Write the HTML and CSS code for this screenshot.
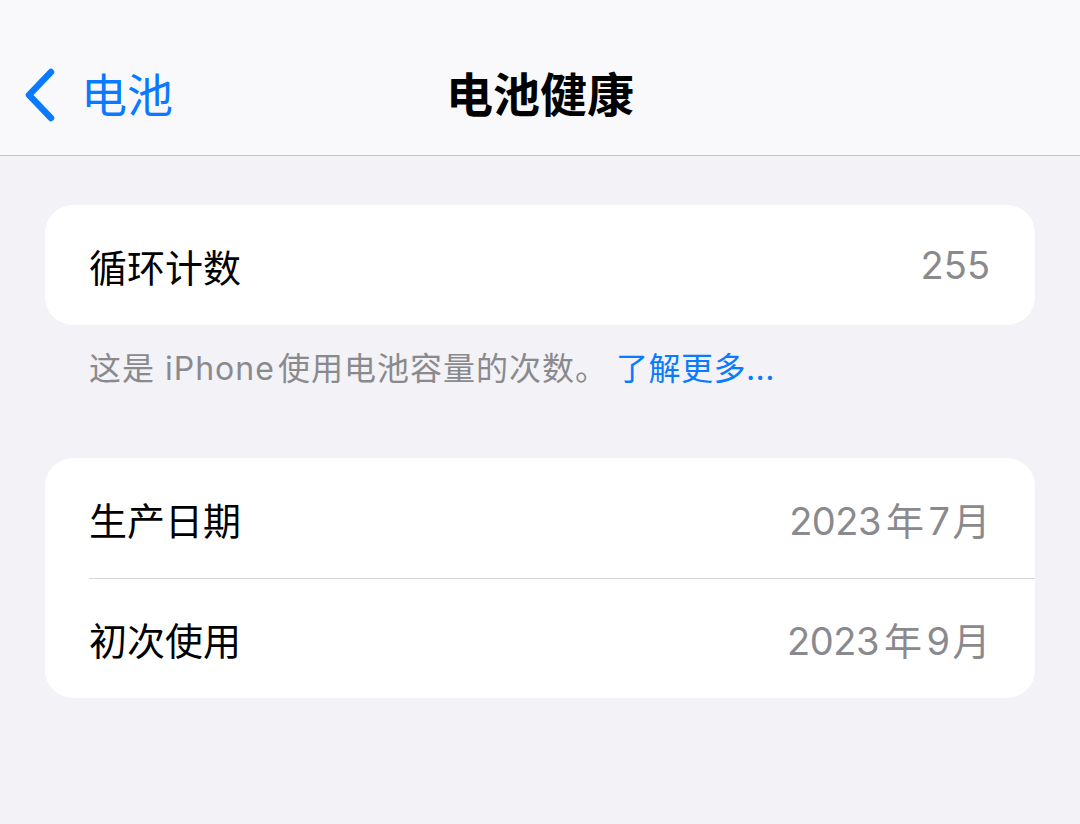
FILE: index.html
```html
<!DOCTYPE html>
<html lang="zh-CN">
<head>
  <meta charset="UTF-8">
  <title>电池健康</title>
  <link rel="stylesheet" href="styles.css">
</head>
<body>

<!-- 顶部导航 -->
<div class="navbar">
  <a class="back" href="#">
    <svg class="chevron" width="34" height="56" viewBox="0 0 34 56">
      <polyline points="27,5 5,28 27,51" fill="none" stroke="#0a7aff" stroke-width="6.5" stroke-linecap="round" stroke-linejoin="round"/>
    </svg>
    <span class="back-text">电池</span>
  </a>
  <div class="title">电池健康</div>
  <div></div>
</div>

<div class="content">
  <!-- 循环计数 -->
  <div class="group">
    <div class="row">
      <span class="label">循环计数</span>
      <span class="value">255</span>
    </div>
  </div>
  <p class="footer">这是 iPhone<span class="gap-sm"></span>使用电池容量的次数。<a href="#" class="link">了解更多...</a></p>

  <!-- 日期 -->
  <div class="group group-dates">
    <div class="row">
      <span class="label">生产日期</span>
      <span class="value">2023<span class="gap"></span>年<span class="gap"></span>7<span class="gap-sm"></span>月</span>
    </div>
    <div class="row">
      <span class="label">初次使用</span>
      <span class="value">2023<span class="gap"></span>年<span class="gap"></span>9<span class="gap-sm"></span>月</span>
    </div>
  </div>
</div>

</body>
</html>
```

FILE: styles.css
```css
* { box-sizing: border-box; }
body {
  margin: 0;
  background: #f2f2f7;
  font-family: "Inter", "Noto Sans CJK SC", sans-serif;
  color: #000;
}
a { text-decoration: none; }

.navbar {
  height: 156px;
  background: #f9f9fb;
  border-bottom: 1px solid #c4c4c7;
  display: grid;
  grid-template-columns: 1fr auto 1fr;
  align-items: center;
  padding: 35px 24px 0 24px;
}
.back {
  display: flex;
  align-items: center;
  gap: 23px;
  color: #0a7aff;
}
.back-text {
  font-size: 46px;
  line-height: 56px;
}
.title {
  font-size: 47px;
  font-weight: 700;
  line-height: 56px;
}

.content { padding-top: 49px; }
.group {
  margin: 0 45px;
  background: #fff;
  border-radius: 28px;
  overflow: hidden;
}
.row {
  height: 120px;
  display: flex;
  align-items: center;
  justify-content: space-between;
  padding: 0 45px 0 44px;
  font-size: 38px;
}
/* 分隔线从文字处开始 */
.group-dates .row + .row {
  position: relative;
}
.group-dates .row + .row::before {
  content: "";
  position: absolute;
  top: 0; left: 44px; right: 0;
  border-top: 1.5px solid #d8d8dc;
}
.label { color: #000; }
.value { color: #8a8a8e; }
.group-dates .value { letter-spacing: -0.5px; }
.gap { display: inline-block; width: 5px; }
.gap-sm { display: inline-block; width: 3px; }

.footer {
  margin: 24px 0 69px;
  padding: 0 45px 0 89px;
  font-size: 32px;
  letter-spacing: 1px;
  line-height: 40px;
  color: #8a8a8e;
}
.link { color: #0a7aff; margin-left: 8px; letter-spacing: 0.5px; }
```
